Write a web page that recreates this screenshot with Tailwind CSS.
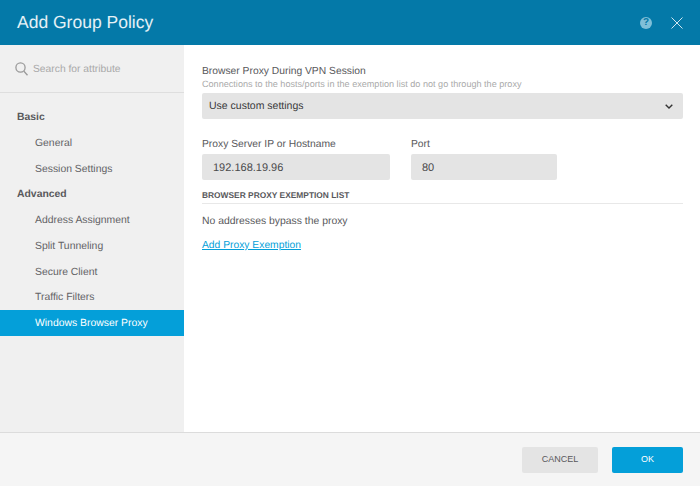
<!DOCTYPE html>
<html>
<head>
<meta charset="utf-8">
<script src="https://cdn.jsdelivr.net/npm/@tailwindcss/browser@4"></script>
</head>
<body class="font-['Liberation_Sans',Arial,sans-serif] [text-rendering:geometricPrecision]">
<div class="w-[700px] h-[486px] flex flex-col overflow-hidden bg-white text-[#58585b]">
  <header class="h-[45px] shrink-0 bg-[#0479a8] flex items-center pl-[17px] pr-[18px]">
    <h1 class="text-[17.5px] leading-none text-white/90 font-normal flex-1">Add Group Policy</h1>
    <div class="w-[12px] h-[12px] rounded-full bg-[#7fbfd8] text-[#0479a8] text-[10px] font-bold leading-[12px] text-center mr-[19px] mt-[1px]">?</div>
    <svg class="w-[12px] h-[12px] -mr-[1px]" viewBox="0 0 12 12" fill="none" stroke="#cfe6f0" stroke-width="1"><path d="M0.5 0.5 L11.5 11.5 M11.5 0.5 L0.5 11.5"/></svg>
  </header>
  <div class="flex-1 flex min-h-0">
    <aside class="w-[184px] shrink-0 bg-[#f0f0f0]">
      <div class="h-[48px] border-b border-[#dedede] flex items-center pl-[15px]">
        <svg class="w-[13px] h-[14px] mr-[5px]" viewBox="0 0 13 14" fill="none" stroke="#9a9a9a" stroke-width="1.3"><circle cx="5.5" cy="5.5" r="4.6"/><path d="M8.9 9.2 L12.5 13.2"/></svg>
        <span class="text-[10.3px] text-[#a9a9a9] pt-[2px]">Search for attribute</span>
      </div>
      <nav class="pt-[11.4px] text-[10.4px] text-[#636366]">
        <div class="h-[25.7px] flex items-center pt-[2px] pl-[17px] font-bold text-[#58585b]">Basic</div>
        <div class="h-[25.7px] flex items-center pt-[2px] pl-[35px]">General</div>
        <div class="h-[25.7px] flex items-center pt-[2px] pl-[35px]">Session Settings</div>
        <div class="h-[25.7px] flex items-center pt-[2px] pl-[17px] font-bold text-[#58585b]">Advanced</div>
        <div class="h-[25.7px] flex items-center pt-[2px] pl-[35px]">Address Assignment</div>
        <div class="h-[25.7px] flex items-center pt-[2px] pl-[35px]">Split Tunneling</div>
        <div class="h-[25.7px] flex items-center pt-[2px] pl-[35px]">Secure Client</div>
        <div class="h-[25.7px] flex items-center pt-[2px] pl-[35px]">Traffic Filters</div>
        <div class="h-[25.7px] flex items-center pt-[2px] pl-[35px] bg-[#049fd9] text-white">Windows Browser Proxy</div>
      </nav>
    </aside>
    <main class="flex-1 pl-[18px] pr-[17px] pt-[20px]">
      <div class="text-[10.3px] leading-[13px] text-[#58585b]">Browser Proxy During VPN Session</div>
      <div class="text-[9.1px] leading-[12px] text-[#aaaaaa]">Connections to the hosts/ports in the exemption list do not go through the proxy</div>
      <div class="mt-[3px] h-[26px] bg-[#e4e4e4] rounded-[2px] flex items-center pl-[7px] pr-[10px] text-[10.5px] text-[#39393b]">
        <span class="flex-1 pt-[2px]">Use custom settings</span>
        <svg class="w-[8px] h-[5px]" viewBox="0 0 8 5" fill="none" stroke="#333" stroke-width="1.4"><path d="M0.7 0.7 L4 4 L7.3 0.7"/></svg>
      </div>
      <div class="mt-[19px] flex gap-[21px]">
        <div class="w-[188px]">
          <div class="text-[10.3px] leading-[13px]">Proxy Server IP or Hostname</div>
          <div class="mt-[3px] h-[26px] bg-[#e4e4e4] rounded-[2px] flex items-center pl-[11px] pt-[2px] text-[11px] text-[#4a4a4c]">192.168.19.96</div>
        </div>
        <div class="w-[146px]">
          <div class="text-[10.3px] leading-[13px]">Port</div>
          <div class="mt-[3px] h-[26px] bg-[#e4e4e4] rounded-[2px] flex items-center pl-[11px] pt-[2px] text-[11px] text-[#4a4a4c]">80</div>
        </div>
      </div>
      <div class="mt-[9px] pb-[2px] border-b border-[#e8e8e8] text-[8.4px] leading-[12px] font-bold text-[#58585b]">BROWSER PROXY EXEMPTION LIST</div>
      <div class="mt-[11px] text-[10.4px] leading-[13px]">No addresses bypass the proxy</div>
      <a class="block mt-[11px] text-[10.3px] leading-[13px] text-[#049fd9] underline">Add Proxy Exemption</a>
    </main>
  </div>
  <footer class="h-[54px] shrink-0 bg-[#f5f5f5] border-t border-[#dcdcdc] flex items-center justify-end gap-[14px] pr-[17px]">
    <button class="w-[76px] h-[26px] bg-[#e4e4e4] rounded-[2px] text-[9px] text-[#58585b]">CANCEL</button>
    <button class="w-[71px] h-[26px] bg-[#049fd9] rounded-[2px] text-[9px] text-white">OK</button>
  </footer>
</div>
</body>
</html>
